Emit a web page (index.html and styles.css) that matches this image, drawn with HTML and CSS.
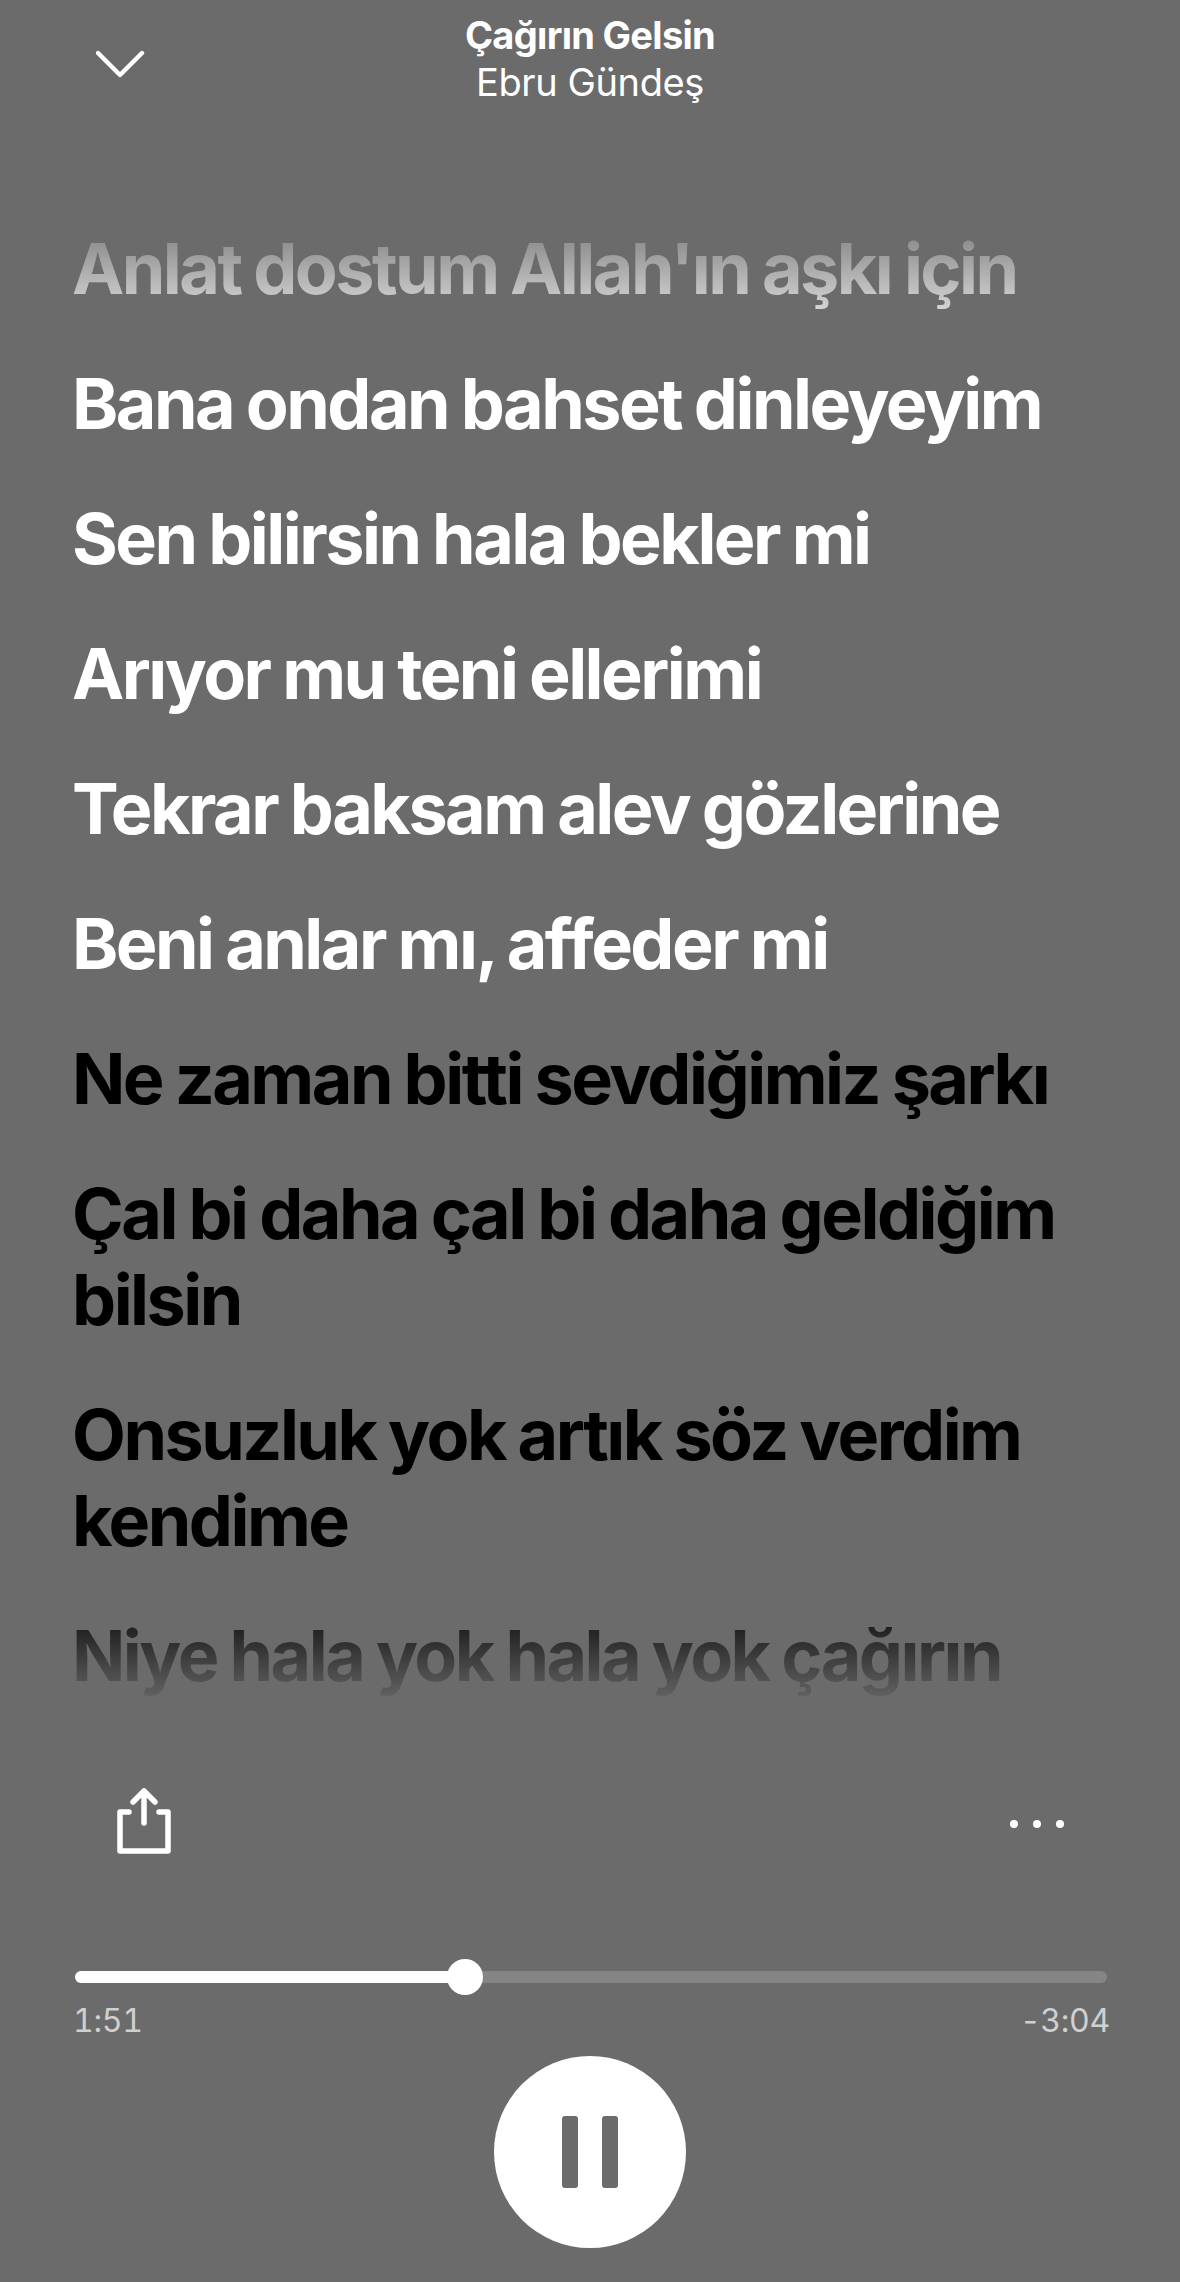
FILE: index.html
```html
<!DOCTYPE html>
<html lang="tr">
<head>
<meta charset="utf-8">
<title>Çağırın Gelsin</title>
<link rel="stylesheet" href="styles.css">
</head>
<body>
<main class="player">
  <header class="top">
    <svg class="chevron" width="50" height="30" viewBox="0 0 50 30"><path d="M2 4 L24 26 L46 4" fill="none" stroke="#fff" stroke-width="4.4" stroke-linecap="round" stroke-linejoin="round"/></svg>
    <div class="track">
      <div class="title">Çağırın Gelsin</div>
      <div class="artist">Ebru Gündeş</div>
    </div>
  </header>
  <section class="lyrics">
    <p class="line past">Anlat dostum Allah'ın aşkı için</p>
    <p class="line past">Bana ondan bahset dinleyeyim</p>
    <p class="line past">Sen bilirsin hala bekler mi</p>
    <p class="line past">Arıyor mu teni ellerimi</p>
    <p class="line past">Tekrar baksam alev gözlerine</p>
    <p class="line past">Beni anlar mı, affeder mi</p>
    <p class="line">Ne zaman bitti sevdiğimiz şarkı</p>
    <p class="line">Çal bi daha çal bi daha geldiğim bilsin</p>
    <p class="line">Onsuzluk yok artık söz verdim kendime</p>
    <p class="line">Niye hala yok hala yok çağırın</p>
  </section>
  <div class="actions">
    <svg class="share" width="58" height="68" viewBox="0 0 58 68"><path d="M14 25 H5 V64 H53 V25 H44 M29 36 V4 M18 15 L29 4 L40 15" fill="none" stroke="#fff" stroke-width="5.5" stroke-linecap="round" stroke-linejoin="round"/></svg>
    <div class="dots"><span></span><span></span><span></span></div>
  </div>
  <div class="progress">
    <div class="bar"><div class="fill"></div><div class="knob"></div></div>
    <div class="times"><span>1:51</span><span>-3:04</span></div>
  </div>
  <div class="controls">
    <div class="pause"><span></span><span></span></div>
  </div>
</main>
</body>
</html>
```
FILE: styles.css
```css
html, body { margin: 0; padding: 0; }
body { background: #6b6b6b; width: 1180px; height: 2282px; overflow: hidden; font-family: "Inter", "Liberation Sans", sans-serif; }
.player { display: flex; flex-direction: column; width: 1180px; height: 2282px; }
.top { display: flex; align-items: flex-start; height: 226px; padding-left: 96px; box-sizing: border-box; position: relative; }
.chevron { margin-top: 49px; }
.track { position: absolute; left: 0; right: 0; top: 12px; text-align: center; color: #fff; }
.title { font-size: 38px; line-height: 46px; font-weight: 700; letter-spacing: -0.7px; }
.artist { font-size: 38px; line-height: 48px; font-weight: 400; letter-spacing: -0.4px; }
.lyrics { height: 1496px; padding: 0 60px 0 72px; overflow: hidden; -webkit-mask-image: linear-gradient(to bottom, rgba(0,0,0,0.15) 0, #000 127px, #000 1365px, rgba(0,0,0,0) 1481px); mask-image: linear-gradient(to bottom, rgba(0,0,0,0.15) 0, #000 127px, #000 1365px, rgba(0,0,0,0) 1481px); }
.line { margin: 0 0 49px; font-size: 70px; line-height: 86px; font-weight: 700; letter-spacing: -2.5px; word-spacing: -1.5px; color: #000; }
.line.past { color: #fff; }
.actions { display: flex; justify-content: space-between; align-items: center; padding: 0 116px 0 115px; height: 70px; margin-top: 67px; }
.share { margin-bottom: 6px; }
.dots { display: flex; gap: 15px; }
.dots span { width: 8px; height: 8px; border-radius: 50%; background: #fff; }
.progress { padding: 0 73px 0 75px; margin-top: 112px; }
.bar { position: relative; height: 12px; border-radius: 6px; background: #858585; }
.fill { width: 390px; height: 100%; border-radius: 6px; background: #fff; }
.knob { position: absolute; left: 372px; top: -12px; width: 36px; height: 36px; border-radius: 50%; background: #fff; }
.times { display: flex; justify-content: space-between; margin: 18px -3px 0 -2px; font-size: 32px; line-height: 40px; color: #d0d0d0; letter-spacing: -0.3px; font-feature-settings: "tnum"; }
.controls { display: flex; justify-content: center; margin-top: 15px; }
.pause { width: 192px; height: 192px; border-radius: 50%; background: #fff; display: flex; justify-content: center; align-items: center; gap: 24px; }
.pause span { width: 16px; height: 72px; border-radius: 3px; background: #6b6b6b; }
```
